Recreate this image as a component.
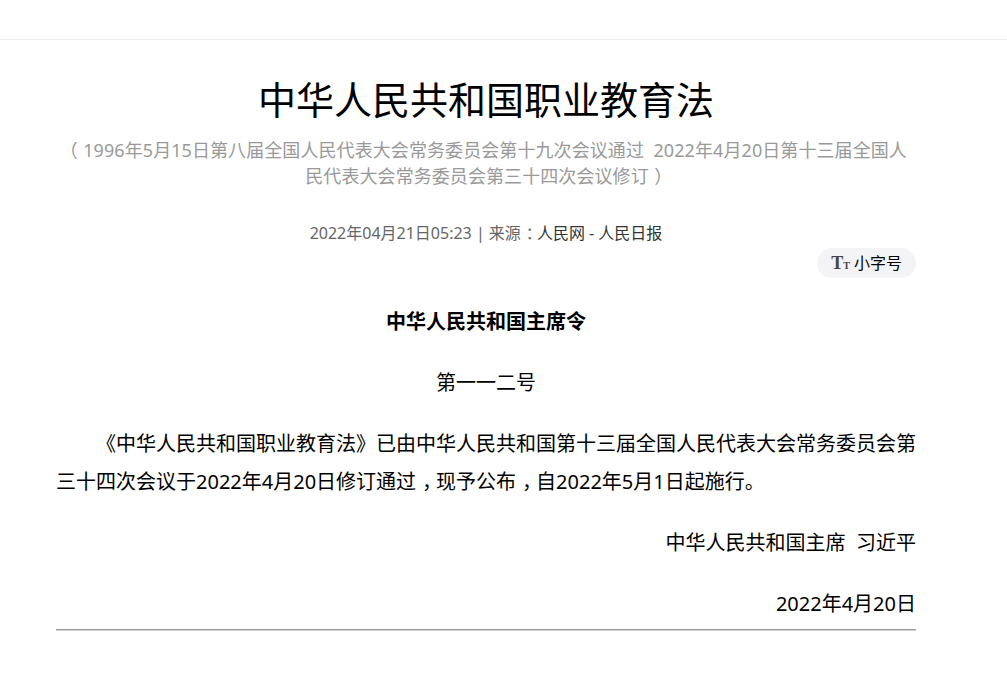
<script>
  let small = false;
</script>

<div class="page">
  <div class="article">
    <h1>中华人民共和国职业教育法</h1>
    <h2><span class="open">（</span>1996年5月15日第八届全国人民代表大会常务委员会第十九次会议通过&nbsp;&nbsp;2022年4月20日第十三届全国人民代表大会常务委员会第三十四次会议修订<span class="close">）</span></h2>
    <div class="meta">2022年04月21日05:23 | 来源<span class="close">：</span><span class="source">人民网 - 人民日报</span></div>
    <div class="tools">
      <button class="size" on:click={() => (small = !small)}><span class="tt">T<small>T</small></span> 小字号</button>
    </div>
    <div class="body">
      <p class="center"><strong>中华人民共和国主席令</strong></p>
      <p class="center">第一一二号</p>
      <p class="indent">《中华人民共和国职业教育法》已由中华人民共和国第十三届全国人民代表大会常务委员会第三十四次会议于2022年4月20日修订通过<span class="close">，</span>现予公布<span class="close">，</span>自2022年5月1日起施行。</p>
      <p class="right">中华人民共和国主席&nbsp;&nbsp;习近平</p>
      <p class="right">2022年4月20日</p>
    </div>
  </div>
</div>

<style>
  :global(body) {
    margin: 0;
    background: #fff;
    font-family: "Noto Sans", "Noto Sans CJK SC", sans-serif;
  }

  .page {
    border-top: 1px solid #eee;
    margin-top: 39px;
    padding: 0 91px 0 56px;
    height: 638px;
    overflow: hidden;
  }

  h1 {
    margin: 0;
    padding-top: 31px;
    font-size: 38px;
    line-height: 56px;
    font-weight: 400;
    color: #000;
    text-align: center;
  }

  h2 {
    margin: 10px 0 0;
    padding: 0 2px;
    font-size: 18px;
    line-height: 26px;
    font-weight: 400;
    letter-spacing: 0.08px;
    color: #999;
    text-align: center;
  }

  /* full-width punctuation sits centred in its box in the original font */
  .open {
    margin-left: -0.3em;
    margin-right: 0.3em;
  }

  .close {
    margin-left: 0.3em;
    letter-spacing: -0.3em;
  }

  .meta {
    margin-top: 31px;
    font-size: 16px;
    line-height: 26px;
    color: #666;
    text-align: center;
  }

  .source {
    color: #333;
  }

  .tools {
    display: flex;
    justify-content: flex-end;
    margin-top: 2px;
  }

  .size {
    height: 30px;
    padding: 0 14px;
    border: 0;
    border-radius: 15px;
    background: #f4f4f6;
    color: #000;
    font: inherit;
    font-size: 16px;
    line-height: 30px;
  }

  .tt {
    font-family: "Liberation Serif", serif;
    font-weight: 700;
    font-size: 18px;
    color: #444;
  }

  .tt small {
    font-size: 10px;
  }

  .body {
    font-size: 20px;
    line-height: 38px;
    color: #000;
    border-bottom: 1px solid #999;
    box-shadow: 0 1px 0 #d4d4d4;
    padding-bottom: 6px;
  }

  .body p {
    margin: 0;
    padding-top: 23px;
  }

  .body p:first-child {
    padding-top: 25px;
  }

  .center {
    text-align: center;
  }

  .right {
    text-align: right;
  }

  .indent {
    text-indent: 2em;
  }
</style>
